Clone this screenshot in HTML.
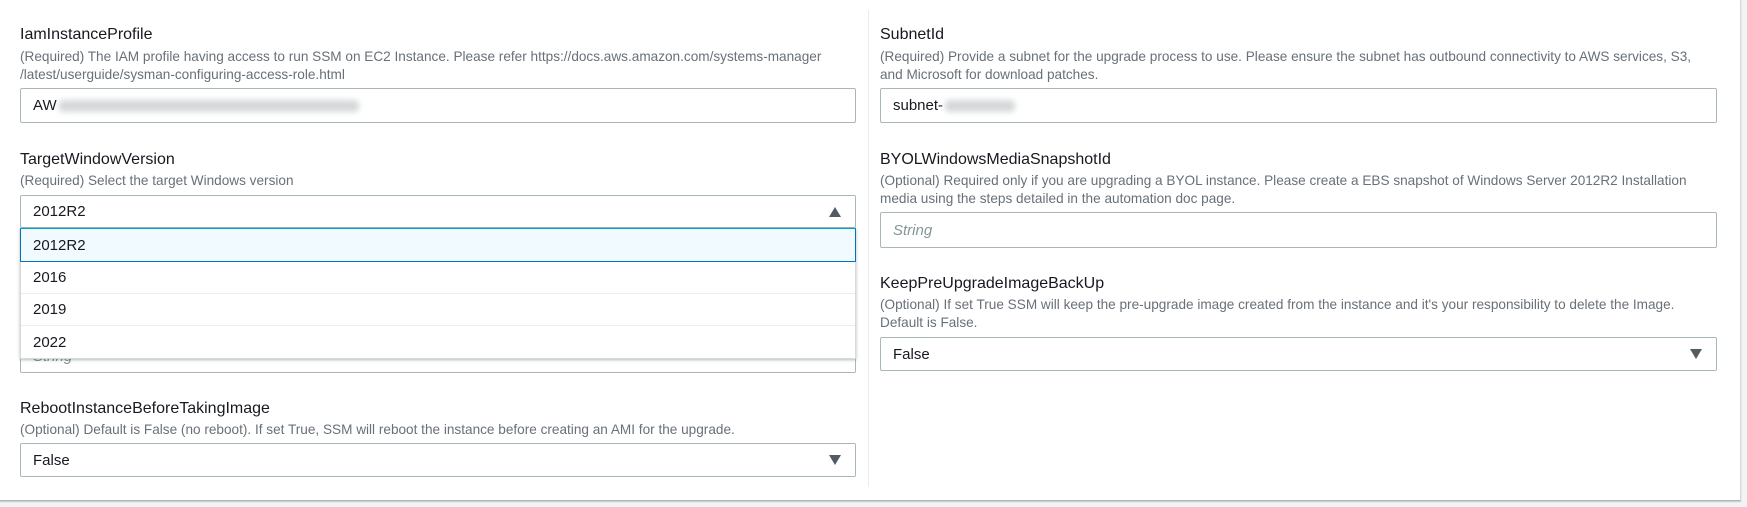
<!DOCTYPE html>
<html><head><style>
body{margin:0;width:1747px;height:507px;background:#f2f3f3;font-family:"Liberation Sans",Arial,sans-serif;color:#16191f;position:relative;overflow:hidden}
.panel{position:absolute;left:0;top:0;width:1740px;height:500px;background:#fff;border-right:1px solid #d5dbdb;border-bottom:1px solid #aab7b8;box-shadow:0 1px 1px rgba(0,28,36,.2)}
.div{position:absolute;left:868px;top:10px;width:1px;height:477px;background:#eaeded}
.a{position:absolute;white-space:nowrap}
.lbl{font-size:16px;line-height:18px}
.desc{font-size:13.6px;color:#687078;line-height:18px}
.box{position:absolute;border:1px solid #aab7b8;border-radius:2px;background:#fff;box-sizing:border-box;font-size:15px;padding-left:12px;display:flex;align-items:center}
.ph{color:#879596;font-style:italic}
.tri{position:absolute;right:14px;top:50%;margin-top:-5px;width:0;height:0;border-left:6px solid transparent;border-right:6px solid transparent}
.dn{border-top:10px solid #545b64}
.up{border-bottom:10px solid #545b64}
.blur{display:inline-block;height:12px;background:#d5d8d9;filter:blur(3px);border-radius:4px;margin-left:2px}
.menu{position:absolute;left:20px;top:228px;width:836px;height:131px;background:#fff;box-shadow:0 1px 3px rgba(0,28,36,.3);border:1px solid #d5dbdb;border-top:none;box-sizing:border-box}
.it{height:32px;border-bottom:1px solid #eaeded;font-size:15px;padding-left:12px;display:flex;align-items:center;box-sizing:border-box}
.hi{background:#f1faff;border:1px solid #0073bb;border-top-color:#00a1c9;margin:0 -1px;height:34px}
</style></head><body>
<div class="panel"></div>
<div class="div"></div>

<div class="a lbl" style="left:20px;top:26px">IamInstanceProfile</div>
<div class="a desc" style="left:20px;top:48px">(Required) The IAM profile having access to run SSM on EC2 Instance. Please refer https://docs.aws.amazon.com/systems-manager</div>
<div class="a desc" style="left:20px;top:66px">/latest/userguide/sysman-configuring-access-role.html</div>
<div class="box" style="left:20px;top:88px;width:836px;height:35px">AW<span class="blur" style="width:300px"></span></div>

<div class="a lbl" style="left:20px;top:151px">TargetWindowVersion</div>
<div class="a desc" style="left:20px;top:172px">(Required) Select the target Windows version</div>
<div class="box" style="left:20px;top:195px;width:836px;height:33px">2012R2<div class="tri up"></div></div>

<div class="box" style="left:20px;top:340px;width:836px;height:33px"><span class="ph">String</span></div>

<div class="menu">
<div class="it hi">2012R2</div>
<div class="it">2016</div>
<div class="it">2019</div>
<div class="it" style="border-bottom:none">2022</div>
</div>

<div class="a lbl" style="left:20px;top:400px">RebootInstanceBeforeTakingImage</div>
<div class="a desc" style="left:20px;top:421px">(Optional) Default is False (no reboot). If set True, SSM will reboot the instance before creating an AMI for the upgrade.</div>
<div class="box" style="left:20px;top:443px;width:836px;height:34px">False<div class="tri dn"></div></div>

<div class="a lbl" style="left:880px;top:26px">SubnetId</div>
<div class="a desc" style="left:880px;top:48px">(Required) Provide a subnet for the upgrade process to use. Please ensure the subnet has outbound connectivity to AWS services, S3,</div>
<div class="a desc" style="left:880px;top:66px">and Microsoft for download patches.</div>
<div class="box" style="left:880px;top:88px;width:837px;height:35px">subnet-<span class="blur" style="width:70px"></span></div>

<div class="a lbl" style="left:880px;top:151px">BYOLWindowsMediaSnapshotId</div>
<div class="a desc" style="left:880px;top:172px">(Optional) Required only if you are upgrading a BYOL instance. Please create a EBS snapshot of Windows Server 2012R2 Installation</div>
<div class="a desc" style="left:880px;top:190px">media using the steps detailed in the automation doc page.</div>
<div class="box" style="left:880px;top:212px;width:837px;height:36px"><span class="ph">String</span></div>

<div class="a lbl" style="left:880px;top:275px">KeepPreUpgradeImageBackUp</div>
<div class="a desc" style="left:880px;top:296px">(Optional) If set True SSM will keep the pre-upgrade image created from the instance and it's your responsibility to delete the Image.</div>
<div class="a desc" style="left:880px;top:314px">Default is False.</div>
<div class="box" style="left:880px;top:337px;width:837px;height:34px">False<div class="tri dn"></div></div>
</body></html>
